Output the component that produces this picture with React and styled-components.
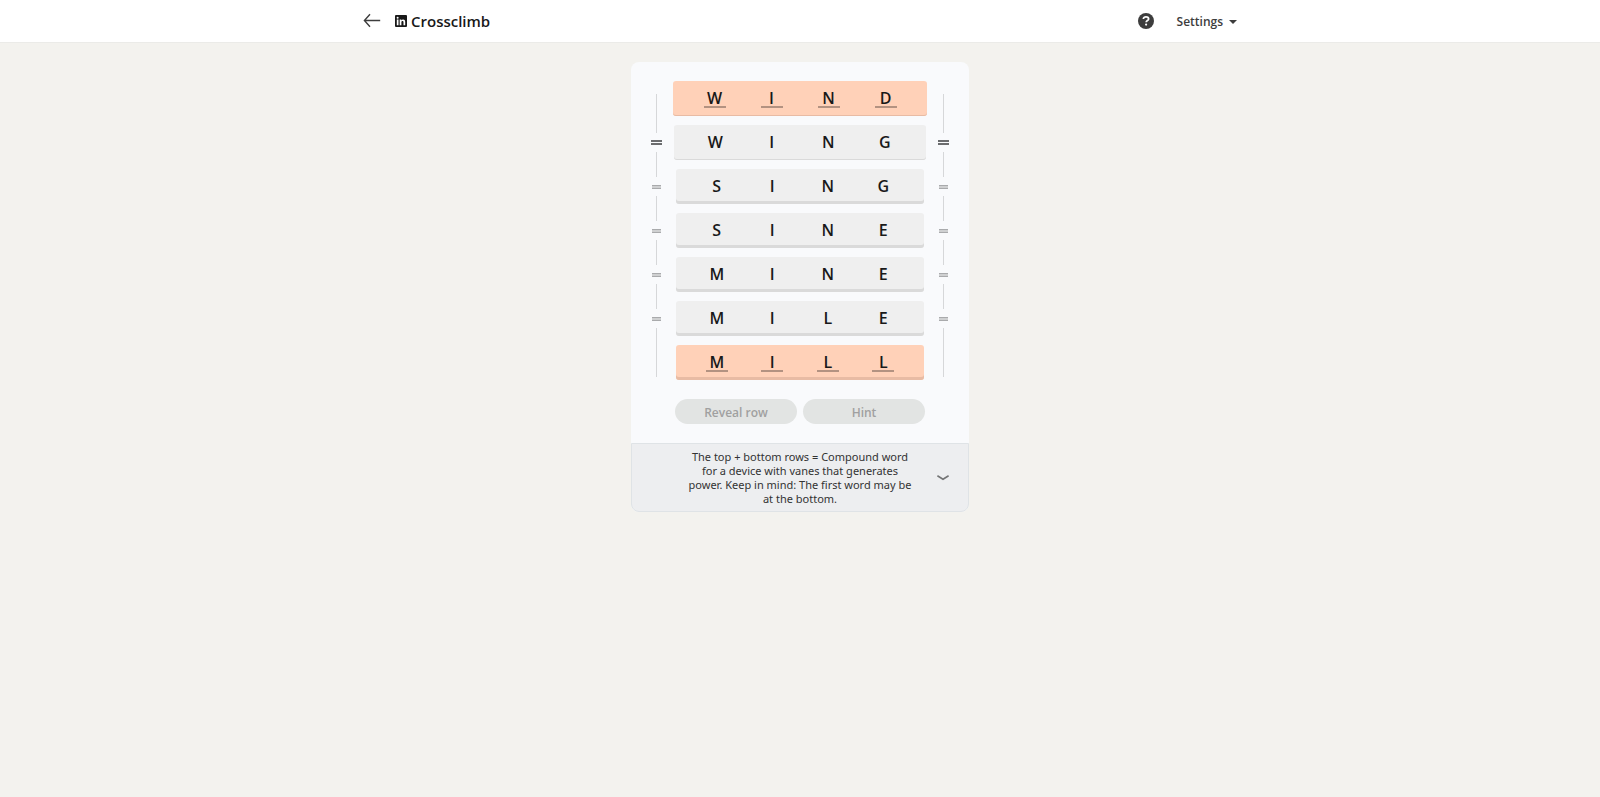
/**
 *
 * Crossclimb
 *
 */

import React from 'react';
import styled, { createGlobalStyle, ThemeProvider } from 'styled-components';

const theme = {
  page: '#f3f2ee',
  surface: '#ffffff',
  card: '#f9fafc',
  rung: '#efefef',
  rungEdge: '#dadada',
  accent: '#ffd1b8',
  accentEdge: '#e8bba4',
  line: '#d6d7d9',
  text: '#191919',
  textSoft: '#3d3d3d',
  disabled: '#e2e4e3',
  disabledText: '#a0a0a0',
  clue: '#edeef0',
  clueLine: '#dfe3e6',
  display: "'Open Sans', 'Noto Sans', sans-serif",
  body: "'Noto Sans', 'Open Sans', sans-serif",
};

const GlobalStyle = createGlobalStyle`
  *,
  *::before,
  *::after {
    box-sizing: border-box;
  }

  body {
    margin: 0;
    background: ${theme.page};
    color: ${theme.text};
    font-family: ${theme.display};
  }

  button,
  input {
    font-family: inherit;
    padding: 0;
    border: 0;
    background: none;
  }
`;

const StyledHeader = styled.header`
  height: 43px;
  padding: 0 16px;
  background: ${props => props.theme.surface};
  border-bottom: 1px solid #ebebe8;
`;

const HeaderInner = styled.div`
  display: flex;
  align-items: center;
  max-width: 874px;
  height: 100%;
  margin: 0 auto;
`;

const IconButton = styled.button`
  display: flex;
  color: ${props => props.theme.textSoft};
`;

const Brand = styled.h1`
  display: flex;
  align-items: center;
  gap: 4px;
  margin: 0 auto 0 14px;
  font-size: 15px;
  font-weight: 600;
  line-height: 20px;
`;

const SettingsButton = styled.button`
  display: flex;
  align-items: center;
  gap: 6px;
  margin-left: 23px;
  color: ${props => props.theme.textSoft};
  font-size: 12px;
  font-weight: 600;
  line-height: 18px;
  padding-top: 2px;
`;

const Card = styled.main`
  max-width: 338px;
  margin: 19px auto;
  background: ${props => props.theme.card};
  border-radius: 8px;
`;

const Board = styled.section`
  display: flex;
  justify-content: space-between;
  padding: 19px 20px 0;
`;

const StyledRail = styled.div`
  display: flex;
  flex-direction: column;
  align-items: center;
  width: 11px;
  padding-top: 13px;
`;

const Segment = styled.span`
  width: 1px;
  height: ${props => props.$height}px;
  background: ${props => props.theme.line};
`;

const Joint = styled.span`
  display: flex;
  align-items: center;
  height: 19px;

  &::before {
    content: '';
    width: ${props => (props.$active ? 11 : 9)}px;
    height: ${props => (props.$active ? 5 : 4)}px;
    border: solid ${props => (props.$active ? '#6b6c6e' : '#a9aaac')};
    border-width: ${props => (props.$active ? '2px 0' : '1px 0')};
    background: ${props => (props.$active ? 'transparent' : '#cfd0d1')};
  }
`;

const Ladder = styled.ol`
  display: flex;
  flex-direction: column;
  align-items: center;
  gap: 9px;
  margin: 0;
  padding: 0;
  list-style: none;
`;

const Rung = styled.li`
  display: grid;
  grid-template-columns: repeat(4, 1fr);
  justify-items: center;
  width: ${props => props.$width}px;
  height: 35px;
  padding: 7px 13px 0;
  border-radius: 3px;
  background: ${props =>
    props.$accent ? props.theme.accent : props.theme.rung};
  box-shadow: inset 0 -${props => props.$edge}px
    ${props => (props.$accent ? props.theme.accentEdge : props.theme.rungEdge)};
`;

const Letter = styled.input`
  width: 22px;
  height: 20px;
  padding-top: 2px;
  border-bottom: 2px solid
    ${props => (props.$underlined ? '#b39281' : 'transparent')};
  border-radius: 0;
  color: ${props => props.theme.text};
  font-size: 16px;
  font-weight: 600;
  line-height: 16px;
  text-align: center;
  outline: none;
`;

const Actions = styled.div`
  display: grid;
  grid-template-columns: 1fr 1fr;
  gap: 6px;
  max-width: 250px;
  margin: 0 auto;
  padding: 19px 0;
`;

const ActionButton = styled.button`
  height: 25px;
  padding-top: 2px;
  border-radius: 13px;
  background: ${props => props.theme.disabled};
  color: ${props => props.theme.disabledText};
  font-size: 12px;
  font-weight: 600;
  line-height: 23px;
`;

const Clue = styled.section`
  display: grid;
  grid-template-columns: 36px 1fr 36px;
  align-items: center;
  padding: 6px 7px 5px;
  border: 1px solid ${props => props.theme.clueLine};
  border-radius: 0 0 8px 8px;
  background: ${props => props.theme.clue};
`;

const ClueText = styled.p`
  grid-column: 2;
  margin: 0 auto;
  max-width: 228px;
  color: #333333;
  font-family: ${props => props.theme.body};
  font-size: 11px;
  line-height: 14px;
  text-align: center;
`;

const ClueToggle = styled(IconButton)`
  justify-content: center;
  color: #737475;
`;

const ROWS = [
  { word: 'WIND', width: 254, edge: 1, accent: true },
  { word: 'WING', width: 252, edge: 1 },
  { word: 'SING', width: 248, edge: 3 },
  { word: 'SINE', width: 248, edge: 3 },
  { word: 'MINE', width: 248, edge: 3 },
  { word: 'MILE', width: 248, edge: 3 },
  { word: 'MILL', width: 248, edge: 3, accent: true },
];

const JOINTS = [25, 25, 25, 25, 49];

function BackIcon() {
  return (
    <svg width="18" height="16" viewBox="0 0 18 16" aria-hidden="true">
      <path
        d="M7 1.2 1.4 7.5 7 13.8M1.4 7.5H17.2"
        fill="none"
        stroke="currentColor"
        strokeWidth="1.4"
      />
    </svg>
  );
}

function LinkedInIcon() {
  return (
    <svg width="12" height="12" viewBox="0 0 12 12" aria-hidden="true">
      <rect width="12" height="12" rx="1" fill="#191919" />
      <path
        d="M1.8 4.6h1.7v5.6H1.8zM4.7 4.6h1.6v.8c.3-.5.9-.9 1.8-.9 1.7 0 2.1 1.1 2.1 2.6v3.1H8.5V7.4c0-.8-.1-1.5-1-1.5s-1.1.7-1.1 1.5v2.8H4.7z"
        fill="#fff"
      />
      <circle cx="2.65" cy="2.7" r="1" fill="#fff" />
    </svg>
  );
}

function HelpIcon() {
  return (
    <svg width="16" height="16" viewBox="0 0 16 16" aria-hidden="true">
      <circle cx="8" cy="8" r="8" fill="currentColor" />
      <path
        d="M5.4 6.1c0-1.5 1.1-2.3 2.6-2.3s2.6.8 2.6 2.1c0 1.7-2.4 1.7-2.4 3.4"
        fill="none"
        stroke="#fff"
        strokeWidth="1.8"
      />
      <circle cx="8.1" cy="11.6" r="1.1" fill="#fff" />
    </svg>
  );
}

function CaretIcon() {
  return (
    <svg width="8" height="4" viewBox="0 0 8 4" aria-hidden="true">
      <path d="M0 0h8L4 4z" fill="currentColor" />
    </svg>
  );
}

function ChevronIcon() {
  return (
    <svg width="12" height="6" viewBox="0 0 12 6" aria-hidden="true">
      <path
        d="M.4 .8 6 4.2 11.6 .8"
        fill="none"
        stroke="currentColor"
        strokeWidth="1.6"
      />
    </svg>
  );
}

function Rail() {
  return (
    <StyledRail aria-hidden="true">
      <Segment $height={39} />
      {JOINTS.map((height, index) => (
        <React.Fragment key={index}>
          <Joint $active={index === 0} />
          <Segment $height={height} />
        </React.Fragment>
      ))}
    </StyledRail>
  );
}

function App() {
  return (
    <ThemeProvider theme={theme}>
      <GlobalStyle />
      <StyledHeader>
        <HeaderInner>
          <IconButton type="button" aria-label="Back">
            <BackIcon />
          </IconButton>
          <Brand>
            <LinkedInIcon />
            Crossclimb
          </Brand>
          <IconButton type="button" aria-label="How to play">
            <HelpIcon />
          </IconButton>
          <SettingsButton type="button">
            Settings
            <CaretIcon />
          </SettingsButton>
        </HeaderInner>
      </StyledHeader>
      <Card>
        <Board aria-label="Word ladder">
          <Rail />
          <Ladder>
            {ROWS.map(({ word, width, edge, accent }, row) => (
              <Rung key={word} $width={width} $edge={edge} $accent={accent}>
                {word.split('').map((letter, index) => (
                  <Letter
                    key={index}
                    aria-label={`Row ${row + 1}, letter ${index + 1}`}
                    value={letter}
                    readOnly
                    $underlined={accent}
                  />
                ))}
              </Rung>
            ))}
          </Ladder>
          <Rail />
        </Board>
        <Actions>
          <ActionButton type="button" disabled>
            Reveal row
          </ActionButton>
          <ActionButton type="button" disabled>
            Hint
          </ActionButton>
        </Actions>
        <Clue>
          <ClueText>
            The top + bottom rows = Compound word for a device with vanes that
            generates power. Keep in mind: The first word may be at the bottom.
          </ClueText>
          <ClueToggle type="button" aria-label="Hide clue">
            <ChevronIcon />
          </ClueToggle>
        </Clue>
      </Card>
    </ThemeProvider>
  );
}

export default App;
